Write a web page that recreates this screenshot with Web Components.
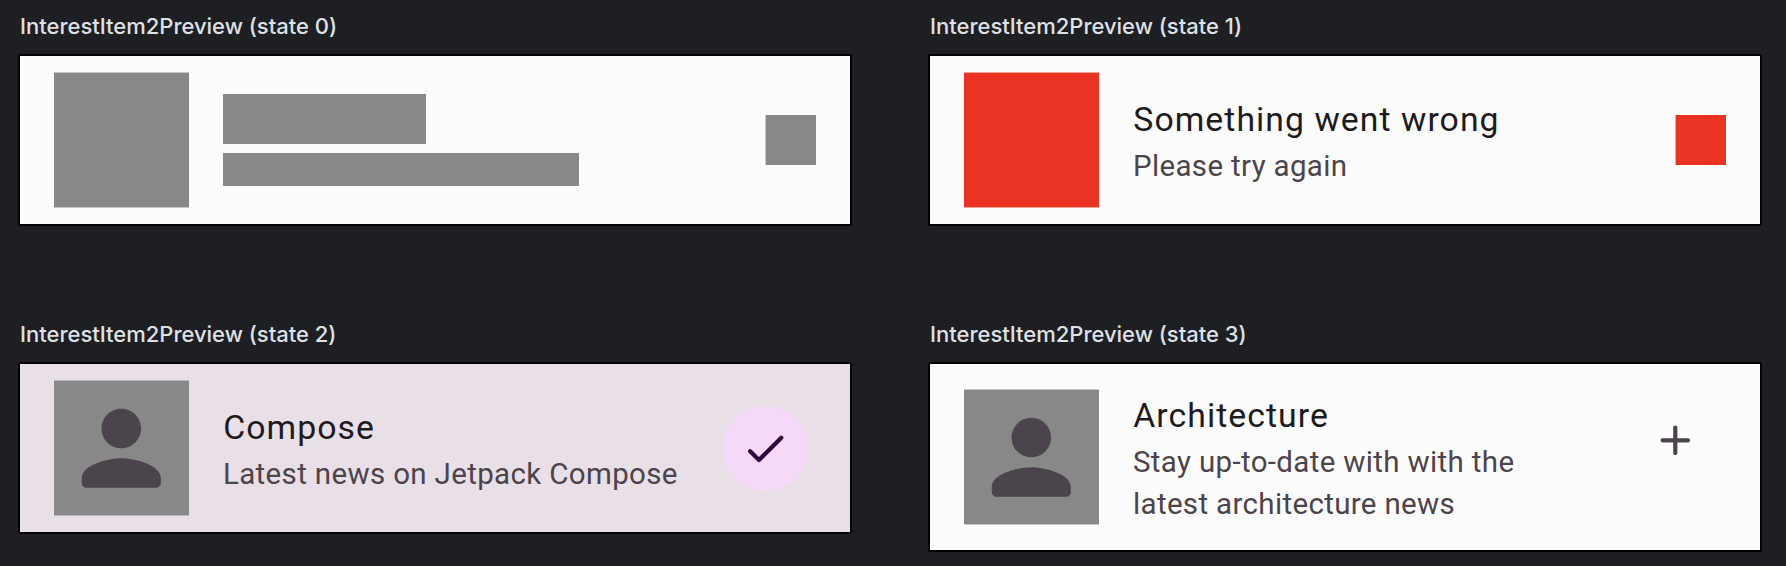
<!DOCTYPE html>
<html lang="en">
<head>
<meta charset="utf-8">
<title>InterestItem2Preview</title>
<style>
  html, body { margin: 0; height: 100%; background: #1e1f23; }
  body { overflow: hidden; }
</style>
</head>
<body>
<preview-grid>
  <preview-pane label="InterestItem2Preview (state 0)">
    <interest-item>
      <item-box slot="icon" tone="grey"></item-box>
      <item-bar slot="title" size="title"></item-bar>
      <item-bar slot="body" size="body"></item-bar>
      <item-box slot="action" tone="grey" small></item-box>
    </interest-item>
  </preview-pane>
  <preview-pane label="InterestItem2Preview (state 1)">
    <interest-item>
      <item-box slot="icon" tone="red"></item-box>
      <span slot="title">Something went wrong</span>
      <span slot="body">Please try again</span>
      <item-box slot="action" tone="red" small></item-box>
    </interest-item>
  </preview-pane>
  <preview-pane label="InterestItem2Preview (state 2)">
    <interest-item selected>
      <item-box slot="icon" tone="grey"><person-icon></person-icon></item-box>
      <span slot="title">Compose</span>
      <span slot="body">Latest news on Jetpack Compose</span>
      <toggle-button slot="action" checked></toggle-button>
    </interest-item>
  </preview-pane>
  <preview-pane label="InterestItem2Preview (state 3)">
    <interest-item tall>
      <item-box slot="icon" tone="grey"><person-icon></person-icon></item-box>
      <span slot="title">Architecture</span>
      <span slot="body">Stay up-to-date with with the<br>latest architecture news</span>
      <toggle-button slot="action"></toggle-button>
    </interest-item>
  </preview-pane>
</preview-grid>
<script>
const define = (name, render) => customElements.define(name, class extends HTMLElement {
  constructor() {
    super();
    this.attachShadow({ mode: 'open' });
  }
  connectedCallback() {
    this.shadowRoot.innerHTML = render(this);
  }
});

define('preview-grid', () => `
  <style>
    :host { display: grid; grid-template-columns: 834px 834px; grid-template-rows: 308px auto;
      column-gap: 76px; padding: 0 18px; align-items: start; }
  </style><slot></slot>`);

define('preview-pane', el => `
  <style>
    :host { display: block; }
    .label { box-sizing: border-box; height: 54px; padding: 12px 0 0 2px; font: 450 22px/28px Inter, sans-serif;
      color: #dfe1e5; white-space: nowrap; letter-spacing: -.01px; }
    .frame { border: 2px solid #000; border-radius: 2px; }
  </style>
  <div class="label">${el.getAttribute('label')}</div>
  <div class="frame"><slot></slot></div>`);

define('interest-item', () => `
  <style>
    :host { display: flex; box-sizing: border-box; height: 168px; align-items: center;
      padding: 0 34px; background: #fcfcfc; font-family: Roboto, sans-serif; }
    :host([selected]) { background: #e9dfe6; }
    :host([tall]) { height: 186px; }
    .text { flex: 1; margin-left: 34px; white-space: nowrap; }
    .title { font-size: 33.75px; line-height: 50.6px; letter-spacing: 1.055px; color: #1d1b1e; }
    .body { font-size: 29.5px; line-height: 42.2px; letter-spacing: .34px; color: #4c444c; }
    ::slotted(span) { display: block; padding-top: .5px; margin-bottom: -.5px; }
    ::slotted(span[slot=title]) { padding: 1px 0 0 .3px; margin-bottom: -1px; }
  </style>
  <slot name="icon"></slot>
  <div class="text">
    <div class="title"><slot name="title"></slot></div>
    <div class="body"><slot name="body"></slot></div>
  </div>
  <slot name="action"></slot>`);

define('item-box', () => `
  <style>
    :host { --tone: #888; display: grid; place-items: center; flex: none; box-sizing: border-box;
      width: 135px; height: 136px; background: var(--tone) padding-box;
      border: solid color-mix(in srgb, var(--tone) 45%, transparent); border-width: 1px 0; }
    :host([tone=red]) { --tone: #ea3323; }
    :host([small]) { width: 51px; height: 50px; border-width: 0 0 0 1px; }
  </style><slot></slot>`);

define('item-bar', () => `
  <style>
    :host { display: block; background: #888; }
    :host([size=title]) { width: 203px; height: 50px; margin-bottom: 9px; }
    :host([size=body]) { width: 356px; height: 33px; }
  </style>`);

define('person-icon', () => `
  <style>
    :host { display: block; width: 118.6px; height: 118.6px; color: #4c444c; }
    svg { display: block; width: 100%; height: 100%; }
  </style>
  <svg viewBox="0 0 24 24" fill="currentColor"><path d="M12 12c2.21 0 4-1.79 4-4s-1.79-4-4-4-4 1.79-4 4 1.79 4 4 4zm0 2c-2.67 0-8 1.34-8 4v1c0 .55.45 1 1 1h14c.55 0 1-.45 1-1v-1c0-2.66-5.33-4-8-4z"/></svg>`);

define('toggle-button', el => `
  <style>
    :host { display: grid; place-items: center; flex: none; width: 85px; height: 85px; border-radius: 50%;
      margin-right: 8px; color: #4c444c; }
    :host([checked]) { background: #f6d8f8; color: #310938; }
    :host(:not([checked])) { margin-bottom: 34px; }
    svg { display: block; width: 50.6px; height: 50.6px; }
  </style>
  <svg viewBox="0 0 24 24" fill="currentColor"><path d="${el.hasAttribute('checked')
    ? 'M9 16.17 5.53 12.7a.996.996 0 1 0-1.41 1.41l4.18 4.18c.39.39 1.02.39 1.41 0L20.29 7.71a.996.996 0 1 0-1.41-1.41L9 16.17z'
    : 'M18 13h-5v5c0 .55-.45 1-1 1s-1-.45-1-1v-5H6c-.55 0-1-.45-1-1s.45-1 1-1h5V6c0-.55.45-1 1-1s1 .45 1 1v5h5c.55 0 1 .45 1 1s-.45 1-1 1z'}"/></svg>`);
</script>
</body>
</html>
